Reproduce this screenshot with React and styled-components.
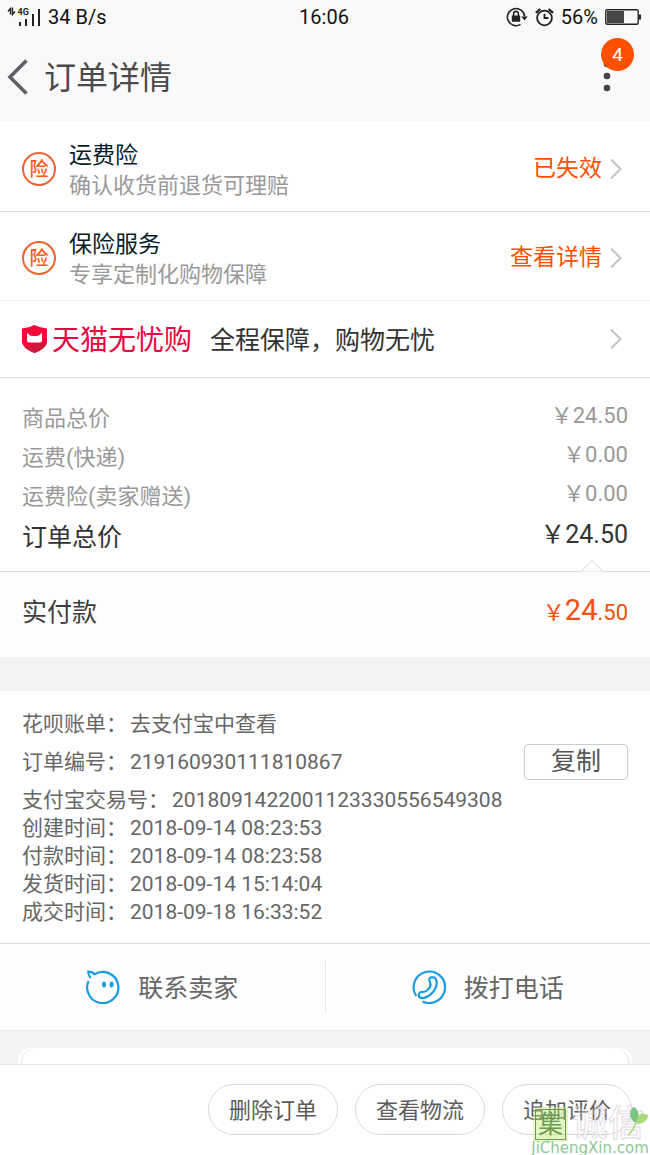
import React from 'react';
import styled, { createGlobalStyle } from 'styled-components';

const GlobalStyle = createGlobalStyle`
  * {
    box-sizing: border-box;
  }
  body {
    margin: 0;
    background-color: #ffffff;
    color: #3d3d3d;
    font-family: Roboto, "Noto Sans CJK SC", sans-serif;
  }
  button {
    font-family: inherit;
    cursor: pointer;
  }
  h1, p, dl, dt, dd {
    margin: 0;
    font-weight: 400;
  }
`;

const Page = styled.div`
  display: flex;
  flex-direction: column;
  min-height: 100vh;
`;

const Header = styled.header`
  background-color: #f9f9f9;
`;

const StatusBar = styled.div`
  display: grid;
  grid-template-columns: 1fr auto 1fr;
  padding: 0 9px 0 7px;
  line-height: 34px;
  font-size: 20px;
  color: #111111;
`;

const StatusGroup = styled.div`
  display: flex;
  align-items: center;
  justify-content: ${(props) => (props.$end ? 'flex-end' : 'flex-start')};
  gap: 7px;
`;

const TitleBar = styled.div`
  display: flex;
  align-items: center;
  padding: 21px 28px 20px 7px;
`;

const IconButton = styled.button`
  display: flex;
  position: relative;
  padding: 0;
  border: none;
  background: none;
`;

const Title = styled.h1`
  flex: 1;
  margin-left: 16px;
  font-size: 32px;
  line-height: 46px;
  color: #4a4a4a;
`;

const Badge = styled.span`
  position: absolute;
  top: -23px;
  left: 9px;
  width: 33px;
  height: 33px;
  border-radius: 50%;
  background-color: #ff5000;
  color: #ffffff;
  font-size: 19px;
  line-height: 34px;
  text-align: center;
`;

const Services = styled.nav`
  padding-top: 2px;
`;

const ServiceRow = styled.a`
  display: flex;
  align-items: center;
  padding: 13px 28px 10px 22px;
  border-bottom: 1px solid ${(props) => (props.$faint ? '#f3f3f3' : '#dddddd')};
  text-decoration: none;
`;

const TmallRow = styled(ServiceRow)`
  padding: 20px 28px 20px 22px;
  line-height: 32px;

  span {
    padding-top: 4px;
  }
`;

const RoundMark = styled.span`
  width: 34px;
  height: 34px;
  border: 2px solid #ea6532;
  border-radius: 50%;
  color: #ff5a14;
  font-size: 19px;
  font-weight: 500;
  line-height: 31px;
  text-align: center;
`;

const ServiceText = styled.div`
  flex: 1;
  margin-left: 13px;
  padding-top: 5px;
  line-height: 30px;
`;

const ServiceName = styled.p`
  font-size: 23px;
  color: #051b28;
`;

const ServiceNote = styled.p`
  font-size: 22px;
  color: #999999;
`;

const ServiceState = styled.span`
  margin-right: 8px;
  font-size: 23px;
  line-height: 30px;
  color: #ff5000;
`;

const TmallName = styled.span`
  margin-left: 5px;
  font-size: 28px;
  color: #e8063f;
`;

const TmallNote = styled.span`
  flex: 1;
  margin-left: 18px;
  font-size: 25px;
  color: #333333;
`;

const Prices = styled.dl`
  padding: 21px 22px 12px;
`;

const PriceRow = styled.div`
  display: flex;
  align-items: flex-start;
  justify-content: space-between;
  font-size: ${(props) => (props.$total ? '25px' : '22px')};
  line-height: ${(props) => (props.$total ? '43px' : '39px')};
  color: ${(props) => (props.$total ? '#333333' : '#999999')};

  dd {
    line-height: ${(props) => (props.$total ? '37px' : '33px')};
  }
`;

const Paid = styled.div`
  display: flex;
  justify-content: space-between;
  position: relative;
  padding: 20px 22px 23px;
  border-top: 1px solid #dddddd;
  background-color: #fdfdfd;
  font-size: 25px;
  line-height: 42px;
`;

const Notch = styled.svg`
  position: absolute;
  top: -13px;
  right: 46px;
`;

const PaidAmount = styled.span`
  font-size: 22px;
  color: #f0500f;

  b {
    font-size: 29px;
    font-weight: 400;
    line-height: 1;
  }
`;

const Divider = styled.div`
  height: 34px;
  background-color: #f3f3f3;
`;

const Info = styled.dl`
  padding: 19px 22px 17px;
  font-size: 21px;
  line-height: 28px;
  color: #666666;
`;

const InfoRow = styled.div`
  display: flex;
  align-items: center;
  margin-bottom: ${(props) => (props.$spaced ? '6px' : '0')};

  dd {
    margin-left: 3px;
  }
`;

const CopyButton = styled.button`
  width: 104px;
  height: 36px;
  margin-left: auto;
  padding: 0;
  border: 1px solid #cccccc;
  border-radius: 4px;
  background-color: #ffffff;
  color: #555555;
  font-size: 25px;
  line-height: 34px;
`;

const Contact = styled.div`
  display: flex;
  align-items: center;
  padding: 17px 0;
  border-top: 1px solid #dddddd;
  border-bottom: 1px solid #eaeaea;
  background-color: #fefefe;
`;

const ContactButton = styled.button`
  display: flex;
  flex: 1;
  align-items: center;
  justify-content: center;
  gap: 18px;
  padding: 0;
  border: none;
  background: none;
  color: #666666;
  font-size: 25px;
  line-height: 48px;

  span {
    padding-top: 4px;
  }

  & + & {
    border-left: 1px solid #e6e6e6;
  }
`;

const CardArea = styled.div`
  display: flex;
  flex: 1;
  padding: 17px 18px 0;
  background-color: #f3f3f3;
`;

const Card = styled.div`
  flex: 1;
  min-height: 16px;
  padding: 0 2px;
  border-radius: 12px 12px 0 0;
  background-color: #fdfdfd;

  &::before {
    content: '';
    display: block;
    height: 100%;
    border: 2px solid #efefef;
    border-width: 0 2px;
    border-radius: 16px 16px 0 0;
    background-color: #ffffff;
  }
`;

const Footer = styled.footer`
  display: flex;
  justify-content: flex-end;
  gap: 17px;
  position: relative;
  padding: 19px 18px 20px;
  border-top: 1px solid #e4e4e4;
  background-color: #ffffff;
`;

const PillButton = styled.button`
  width: 130px;
  height: 51px;
  padding: 0 0 3px;
  border: 1px solid #dadada;
  border-radius: 26px;
  background-color: #ffffff;
  color: #5c5c5c;
  font-size: 22px;
`;

const Watermark = styled.div`
  position: absolute;
  right: 0;
  bottom: 0;
  width: 120px;
  pointer-events: none;
`;

const WatermarkLogo = styled.div`
  display: flex;
  align-items: center;
  gap: 6px;
  padding-left: 5px;
`;

const WatermarkSeal = styled.span`
  width: 31px;
  height: 31px;
  border: 1px solid #6f9a55;
  outline: 2px solid rgba(205, 240, 140, 0.5);
  background-color: rgba(190, 235, 120, 0.45);
  color: #6d9a55;
  font-size: 25px;
  line-height: 29px;
  text-align: center;
`;

const WatermarkName = styled.span`
  color: rgba(255, 255, 255, 0.2);
  font-size: 36px;
  font-weight: 500;
  line-height: 36px;
  white-space: nowrap;
  -webkit-text-stroke: 1px rgba(205, 195, 205, 0.6);
`;

const WatermarkSite = styled.div`
  font-family: "DejaVu Sans", sans-serif;
  font-size: 15px;
  line-height: 13px;
  text-align: center;
  color: #8fc79a;
`;

const Leaf = styled.svg`
  position: absolute;
  top: 0;
  right: 0;
`;

const priceRows = [
  { label: '商品总价', amount: '￥24.50' },
  { label: '运费(快递)', amount: '￥0.00' },
  { label: '运费险(卖家赠送)', amount: '￥0.00' },
  { label: '订单总价', amount: '￥24.50', total: true },
];

const infoRows = [
  { label: '花呗账单：', value: '去支付宝中查看', spaced: true },
  { label: '订单编号：', value: '219160930111810867', spaced: true, copy: true },
  { label: '支付宝交易号：', value: '2018091422001123330556549308' },
  { label: '创建时间：', value: '2018-09-14 08:23:53' },
  { label: '付款时间：', value: '2018-09-14 08:23:58' },
  { label: '发货时间：', value: '2018-09-14 15:14:04' },
  { label: '成交时间：', value: '2018-09-18 16:33:52' },
];

function Signal() {
  return (
    <svg width="34" height="20" viewBox="7 6 34 20" fill="#222">
      <path d="M10.5 6.5v7M8 10.5l2.5-3M12.5 6.5v7l2.5-3" stroke="#222" strokeWidth="1.4" fill="none" />
      <text x="17.5" y="14" fontSize="9" fontWeight="700" fontFamily="Roboto">4G</text>
      <rect x="19" y="21" width="2" height="4" />
      <rect x="25" y="18" width="2" height="7" />
      <rect x="32" y="13" width="2" height="12" />
      <rect x="38" y="8" width="2" height="17" />
    </svg>
  );
}

function RotationLock() {
  return (
    <svg width="22" height="20" viewBox="0 0 22 20" fill="none" stroke="#222" strokeWidth="1.6">
      <path d="M14.5 17.4A8.6 8.6 0 1 1 18.6 9.5" />
      <path d="M15.3 9.5h6.4l-3.2 4z" fill="#222" stroke="none" />
      <rect x="5.8" y="8.6" width="8.4" height="6.2" rx="0.6" fill="#222" stroke="none" />
      <path d="M7.6 9V7a2.4 2.6 0 0 1 4.8 0v2" />
    </svg>
  );
}

function Alarm() {
  return (
    <svg width="19" height="20" viewBox="0 0 19 20" fill="none" stroke="#222" strokeWidth="1.8">
      <circle cx="9.5" cy="11" r="7.4" />
      <path d="M9.5 6.8V11h4" />
      <path d="M0.9 5.8L5.3 2M18.1 5.8L13.7 2" strokeWidth="2.2" />
    </svg>
  );
}

function Battery() {
  return (
    <svg width="36" height="18" viewBox="0 0 36 18">
      <rect x="0.8" y="1.8" width="32.4" height="14.4" rx="1.5" fill="none" stroke="#222" strokeWidth="1.4" />
      <rect x="2" y="3" width="17" height="12" fill="#444" />
      <rect x="34" y="6.5" width="2" height="5" fill="#222" />
    </svg>
  );
}

function Arrow() {
  return (
    <svg width="12" height="22" viewBox="0 0 12 22" fill="none" stroke="#c6c6c6" strokeWidth="2.2">
      <path d="M1 1.5L10.5 11L1 20.5" />
    </svg>
  );
}

function Shield() {
  return (
    <svg width="25" height="28" viewBox="0 0 25 28">
      <path d="M12.5 0Q18 3 25 3.5V17.5Q24 23.5 12.5 28Q1 23.5 0 17.5V3.5Q7 3 12.5 0z" fill="#f8083a" />
      <path d="M24.8 16Q25 23.5 12.5 28Q5 25 2 21.5L18 18.5z" fill="#d01a3c" />
      <path d="M5 8.5Q5.5 8 6.5 9Q8 11 10 11H15Q17 11 18.5 9Q19.5 8 20 8.5V15.5Q20 17.5 18 17.5H7Q5 17.5 5 15.5z" fill="#fff" />
    </svg>
  );
}

function ChatFace() {
  return (
    <svg width="34" height="34" viewBox="0 0 34 34" fill="none" stroke="#1a9ce0" strokeWidth="2.2" strokeLinejoin="round">
      <path d="M2.6 11A15.6 15.6 0 1 0 8.5 4.3Q6.5 1.6 2.2 1.5Q2.2 5 4.6 8" />
      <ellipse cx="18" cy="14.5" rx="2" ry="3" fill="#1a9ce0" stroke="none" />
      <ellipse cx="25.5" cy="14.5" rx="2" ry="3" fill="#1a9ce0" stroke="none" />
    </svg>
  );
}

function Phone() {
  return (
    <svg width="34" height="34" viewBox="0 0 34 34" fill="none" stroke="#1a9ce0" strokeWidth="2.2">
      <path d="M4.3 26A15.7 15.7 0 1 1 10.5 31.4" />
      <path d="M17.5 11C16.5 8 19.5 6.3 22 7.5C26 9.5 25.5 17 21.5 21.5C17.5 26.5 11 29.5 8 27.5C5.5 25.5 7 21.5 10.5 22C12.5 22.3 13.5 22 16 19.5C18.5 17 19 15.5 18.5 13.5C18.3 12.5 17.8 12 17.5 11z" />
    </svg>
  );
}

function App() {
  return (
    <Page>
      <GlobalStyle />

      <Header>
        <StatusBar>
          <StatusGroup>
            <Signal />
            <span>34 B/s</span>
          </StatusGroup>
          <span>16:06</span>
          <StatusGroup $end>
            <RotationLock />
            <Alarm />
            <span>56%</span>
            <Battery />
          </StatusGroup>
        </StatusBar>
        <TitleBar>
          <IconButton aria-label="返回">
            <svg width="21" height="38" viewBox="0 0 21 38" fill="none" stroke="#5f6166" strokeWidth="3.6">
              <path d="M19.5 1.5L3 18L19.5 34.5" />
            </svg>
          </IconButton>
          <Title>订单详情</Title>
          <IconButton aria-label="更多">
            <svg width="30" height="34" viewBox="0 0 30 34" fill="#444">
              <circle cx="15" cy="3" r="3.3" />
              <circle cx="15" cy="15" r="3.3" />
              <circle cx="15" cy="27" r="3.3" />
            </svg>
            <Badge>4</Badge>
          </IconButton>
        </TitleBar>
      </Header>

      <Services>
        <ServiceRow href="#freight">
          <RoundMark>险</RoundMark>
          <ServiceText>
            <ServiceName>运费险</ServiceName>
            <ServiceNote>确认收货前退货可理赔</ServiceNote>
          </ServiceText>
          <ServiceState>已失效</ServiceState>
          <Arrow />
        </ServiceRow>
        <ServiceRow href="#insurance" $faint>
          <RoundMark>险</RoundMark>
          <ServiceText>
            <ServiceName>保险服务</ServiceName>
            <ServiceNote>专享定制化购物保障</ServiceNote>
          </ServiceText>
          <ServiceState>查看详情</ServiceState>
          <Arrow />
        </ServiceRow>
        <TmallRow href="#tmall">
          <Shield />
          <TmallName>天猫无忧购</TmallName>
          <TmallNote>全程保障，购物无忧</TmallNote>
          <Arrow />
        </TmallRow>
      </Services>

      <Prices>
        {priceRows.map((row) => (
          <PriceRow key={row.label} $total={row.total}>
            <dt>{row.label}</dt>
            <dd>{row.amount}</dd>
          </PriceRow>
        ))}
      </Prices>

      <Paid>
        <Notch width="24" height="13" viewBox="0 0 24 13">
          <path d="M1 12.5L12 1.5L23 12.5" fill="#fdfdfd" stroke="#d4d4d4" />
        </Notch>
        <span>实付款</span>
        <PaidAmount>￥<b>24</b>.50</PaidAmount>
      </Paid>

      <Divider />

      <Info>
        {infoRows.map((row) => (
          <InfoRow key={row.label} $spaced={row.spaced}>
            <dt>{row.label}</dt>
            <dd>{row.value}</dd>
            {row.copy && <CopyButton>复制</CopyButton>}
          </InfoRow>
        ))}
      </Info>

      <Contact>
        <ContactButton>
          <ChatFace />
          <span>联系卖家</span>
        </ContactButton>
        <ContactButton>
          <Phone />
          <span>拨打电话</span>
        </ContactButton>
      </Contact>

      <CardArea>
        <Card />
      </CardArea>

      <Footer>
        <PillButton>删除订单</PillButton>
        <PillButton>查看物流</PillButton>
        <PillButton>追加评价</PillButton>
        <Watermark>
          <WatermarkLogo>
            <WatermarkSeal>集</WatermarkSeal>
            <WatermarkName>诚信</WatermarkName>
          </WatermarkLogo>
          <WatermarkSite>JiChengXin.com</WatermarkSite>
          <Leaf width="22" height="32" viewBox="0 0 22 32">
            <path d="M8 17C0 13 1 3 6 1C11 4 12 11 8 17z" fill="#7cc47f" />
            <path d="M8 17C9 9 13 6 20 9C20 15 14 19 8 17z" fill="#a9db7c" />
            <path d="M8 16Q6 24 0 29" stroke="#a9db7c" strokeWidth="1.5" fill="none" />
          </Leaf>
        </Watermark>
      </Footer>
    </Page>
  );
}

export default App;
